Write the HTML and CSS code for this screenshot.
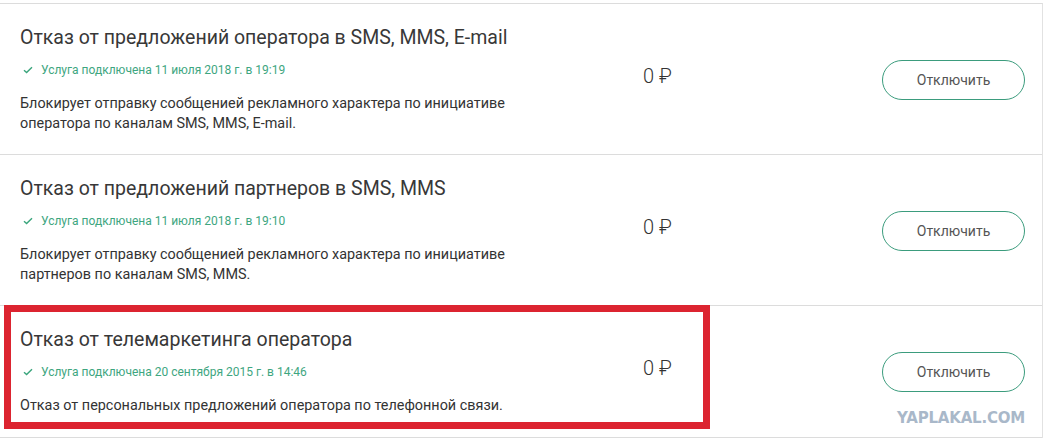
FILE: index.html
```html
<!DOCTYPE html>
<html lang="ru">
<head>
<meta charset="utf-8">
<title>Услуги</title>
<link rel="stylesheet" href="styles.css">
</head>
<body>
<div class="page">
  <div class="list">
    <div class="row">
      <div class="info">
        <div class="title">Отказ от предложений оператора в SMS, MMS, E-mail</div>
        <div class="status"><svg class="check" width="10" height="8" viewBox="0 0 10 8"><path d="M1 4.2 L3.6 6.6 L9 1.2" fill="none" stroke="#3aa57c" stroke-width="1.4"/></svg>Услуга подключена 11 июля 2018 г. в 19:19</div>
        <div class="desc">Блокирует отправку сообщенией рекламного характера по инициативе<br>оператора по каналам SMS, MMS, E-mail.</div>
      </div>
      <div class="price">0 ₽</div>
      <div class="action"><button class="btn">Отключить</button></div>
    </div>
    <div class="row">
      <div class="info">
        <div class="title">Отказ от предложений партнеров в SMS, MMS</div>
        <div class="status"><svg class="check" width="10" height="8" viewBox="0 0 10 8"><path d="M1 4.2 L3.6 6.6 L9 1.2" fill="none" stroke="#3aa57c" stroke-width="1.4"/></svg>Услуга подключена 11 июля 2018 г. в 19:10</div>
        <div class="desc">Блокирует отправку сообщенией рекламного характера по инициативе<br>партнеров по каналам SMS, MMS.</div>
      </div>
      <div class="price">0 ₽</div>
      <div class="action"><button class="btn">Отключить</button></div>
    </div>
    <div class="row highlighted">
      <div class="info">
        <div class="title">Отказ от телемаркетинга оператора</div>
        <div class="status"><svg class="check" width="10" height="8" viewBox="0 0 10 8"><path d="M1 4.2 L3.6 6.6 L9 1.2" fill="none" stroke="#3aa57c" stroke-width="1.4"/></svg>Услуга подключена 20 сентября 2015 г. в 14:46</div>
        <div class="desc">Отказ от персональных предложений оператора по телефонной связи.</div>
      </div>
      <div class="price">0 ₽</div>
      <div class="action"><button class="btn">Отключить</button></div>
      <div class="mark"></div>
      <div class="watermark">YAPLAKAL.COM</div>
    </div>
  </div>
</div>
</body>
</html>
```
FILE: styles.css
```css
html, body {
  margin: 0;
  padding: 0;
  background: #ffffff;
}
.page {
  padding-top: 3px;
  width: 1051px;
  height: 446px;
  overflow: hidden;
  font-family: Roboto, "Liberation Sans", sans-serif;
  color: #333333;
}
.list {
  width: 1043px;
  border-top: 1px solid #dcdcdc;
  border-right: 1px solid #e2e2e2;
  box-sizing: border-box;
}
.row {
  position: relative;
  display: grid;
  grid-template-columns: 623px 239px 143px;
  align-items: center;
  padding: 21px 18px 20px 20px;
  border-bottom: 1px solid #dcdcdc;
}
.row.highlighted {
  padding-bottom: 21px;
}
.info {
  display: flex;
  flex-direction: column;
}
.title {
  font-size: 19.5px;
  line-height: 26px;
  font-weight: 400;
  color: #383838;
}
.status {
  display: flex;
  align-items: center;
  margin-top: 10px;
  font-size: 12px;
  line-height: 18px;
  color: #3ea67f;
}
.check {
  margin-left: 3px;
  margin-right: 8px;
}
.desc {
  margin-top: 15px;
  font-size: 14.4px;
  line-height: 20px;
  color: #333333;
}
.price {
  font-size: 20px;
  font-weight: 300;
  color: #333333;
  margin-bottom: 8px;
}
.btn {
  width: 143px;
  height: 40px;
  border: 1px solid #3b9c7d;
  border-radius: 20px;
  background: #ffffff;
  font-family: Roboto, "Liberation Sans", sans-serif;
  font-size: 14px;
  color: #555555;
  cursor: pointer;
}
.mark {
  position: absolute;
  left: 4px;
  top: -1px;
  width: 706px;
  height: 124px;
  border: 7px solid #dc2430;
  box-sizing: border-box;
}
.watermark {
  position: absolute;
  right: 17px;
  bottom: 10px;
  font-family: "DejaVu Sans", sans-serif;
  font-weight: 700;
  font-size: 15px;
  letter-spacing: -0.2px;
  color: #a9b8c9;
}
```
